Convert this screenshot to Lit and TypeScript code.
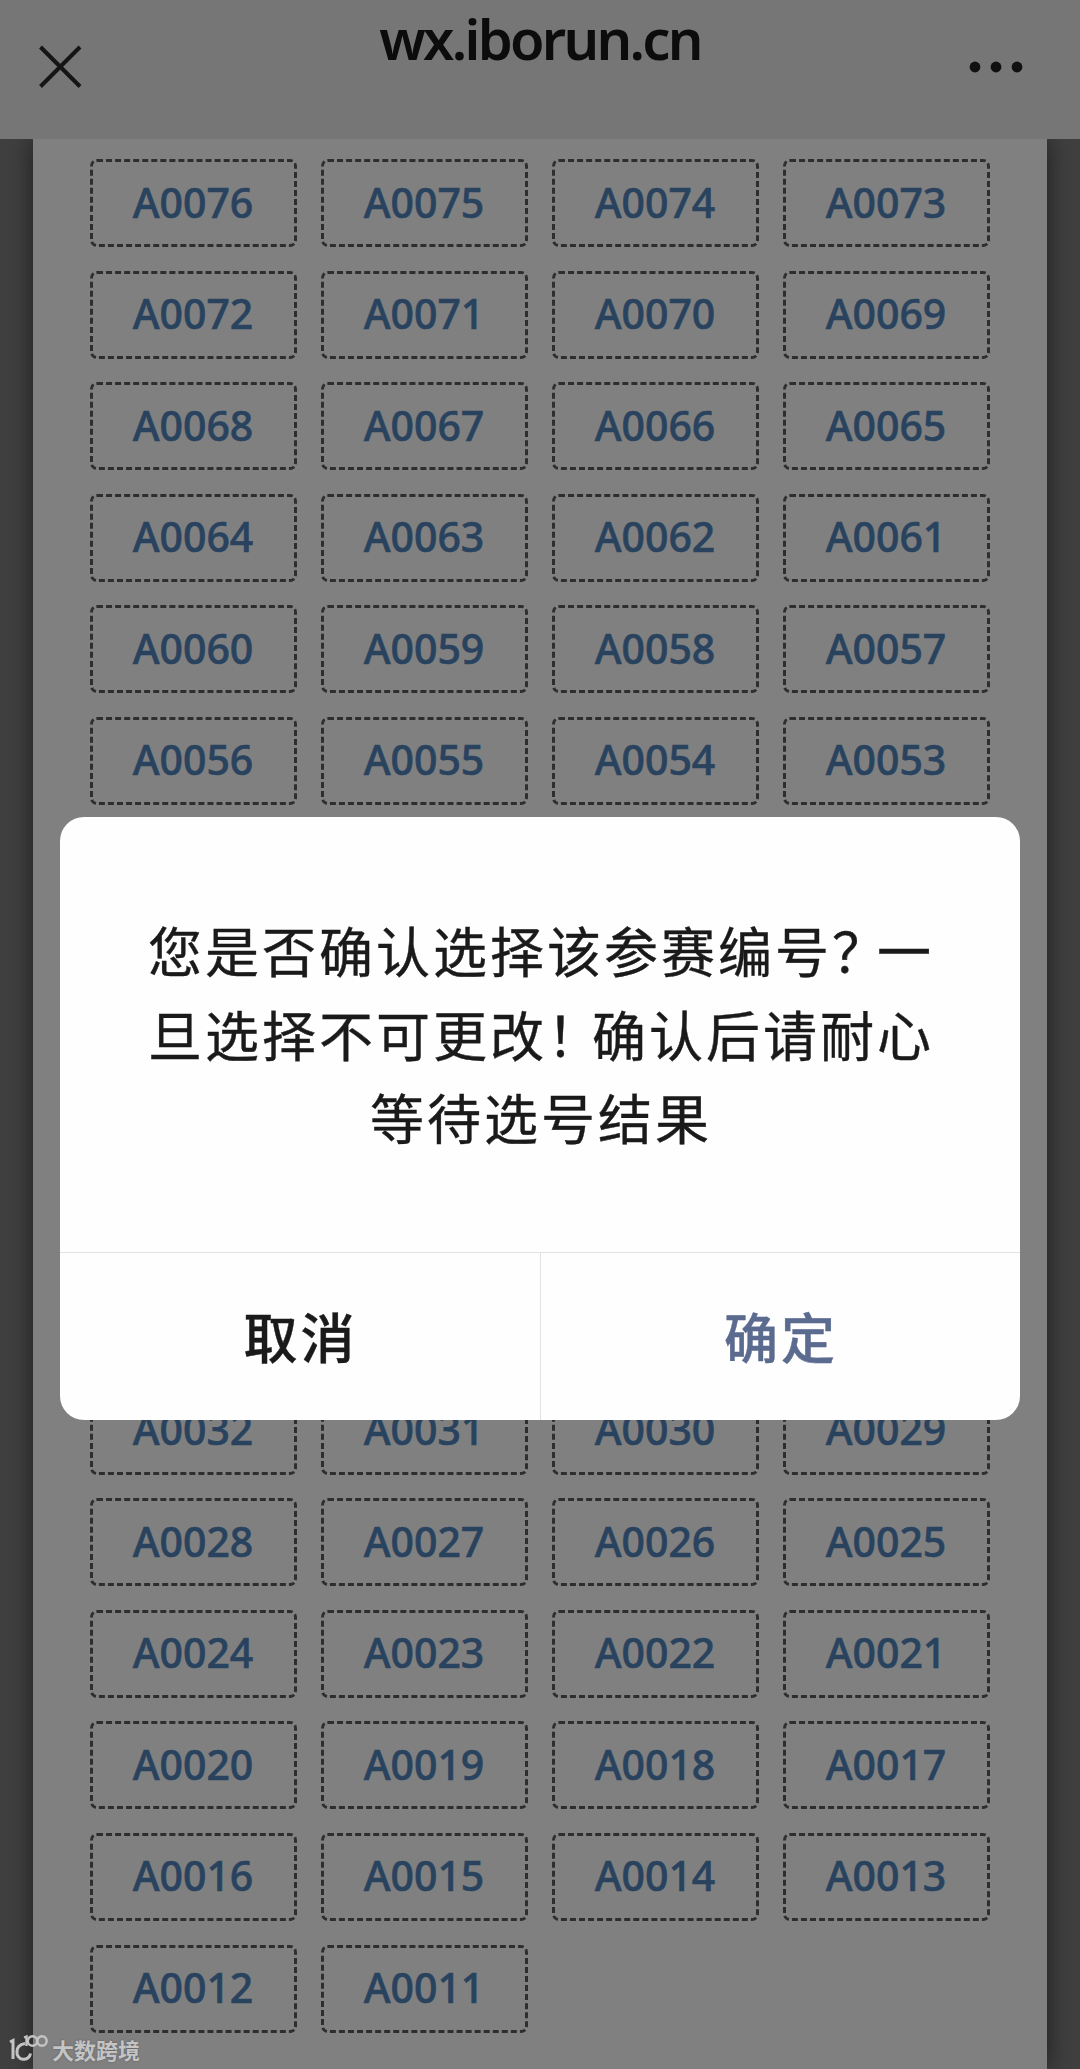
import { LitElement, html, css } from "lit";
import { customElement } from "lit/decorators.js";

const label = (n: number) => "A" + String(n).padStart(4, "0");
const range = (from: number, to: number) =>
  Array.from({ length: from - to + 1 }, (_, i) => label(from - i));

@customElement("number-grid")
class NumberGrid extends LitElement {
  static styles = css`
    :host { display: block; }
    .grid {
      display: grid;
      grid-template-columns: repeat(4, 207px);
      grid-auto-rows: 88px;
      column-gap: 24px;
      row-gap: 23.6px;
    }
    .cell {
      box-sizing: border-box;
      display: flex;
      align-items: center;
      justify-content: center;
      border: 3px dashed #2e2e2e;
      border-radius: 7px;
      color: #29435f;
      font: 500 41px/1 "Noto Sans", sans-serif;
      -webkit-text-stroke: 0.6px #29435f;
      padding: 0 1px 2px 0;
    }
    .covered { grid-column: 1 / -1; grid-row: span 5; }
  `;
  render() {
    const cell = (t: string) => html`<div class="cell"><span>${t}</span></div>`;
    return html`<div class="grid">
      ${range(76, 53).map(cell)}
      <div class="covered"></div>
      ${range(32, 11).map(cell)}
    </div>`;
  }
}

@customElement("confirm-dialog")
class ConfirmDialog extends LitElement {
  static styles = css`
    :host {
      display: flex;
      flex-direction: column;
      box-sizing: border-box;
      width: 960px;
      height: 603px;
      border-radius: 24px;
      background: #fefefe;
      overflow: hidden;
      color: #1a1a1a;
      font-family: "Noto Sans CJK SC", sans-serif;
    }
    .message {
      flex: 1;
      padding: 91px 0 0 2px;
      font-size: 54px;
      line-height: 83.5px;
      letter-spacing: 3px;
      text-align: center;
      white-space: nowrap;
      -webkit-text-stroke: 0.4px #1a1a1a;
    }
    .line { display: block; }
    .mark { letter-spacing: -9px; }
    .actions {
      display: grid;
      grid-template-columns: 480px 480px;
      height: 167px;
      border-top: 1px solid #e2e2e2;
    }
    .button {
      box-sizing: border-box;
      display: flex;
      align-items: center;
      justify-content: center;
      padding: 0 0 3px 1px;
      font-size: 54px;
      font-weight: 500;
      letter-spacing: 3px;
      -webkit-text-stroke: 0.4px currentColor;
    }
    .ok { color: #5b6b8f; border-left: 1px solid #e2e2e2; }
  `;
  render() {
    return html`
      <div class="message">
        <span class="line">您是否确认选择该参赛编号<span class="mark">？</span>一</span>
        <span class="line">旦选择不可更改<span class="mark">！</span>确认后请耐心</span>
        <span class="line">等待选号结果</span>
      </div>
      <div class="actions">
        <div class="button">取消</div>
        <div class="button ok">确定</div>
      </div>`;
  }
}

@customElement("app-root")
class AppRoot extends LitElement {
  static styles = css`
    :host {
      display: flex;
      flex-direction: column;
      position: relative;
      width: 1080px;
      height: 2069px;
      overflow: hidden;
      background: #404040;
    }
    .header {
      box-sizing: border-box;
      display: grid;
      grid-template-columns: 1fr auto 1fr;
      align-items: start;
      height: 139px;
      padding: 0 55px 0 39px;
      background: #767676;
      color: #0c0c0c;
      flex: none;
      z-index: 1;
    }
    .close { margin-top: 45px; }
    .more { margin-top: 60px; justify-self: end; }
    .title {
      font: 600 56px/77px "Noto Sans", sans-serif;
      letter-spacing: -2.7px;
      padding-left: 16px;
    }
    .panel {
      box-sizing: border-box;
      width: 1014px;
      margin-left: 33px;
      padding: 20px 0 0 57px;
      flex: 1;
      background: #808080;
      box-shadow: 0 0 24px #1c1c1c;
    }
    .dialog { position: absolute; left: 60px; top: 817px; }
    .watermark {
      position: absolute;
      left: 9px;
      top: 2032px;
      display: flex;
      gap: 4px;
      color: #c4c4c4;
      font: 700 22px/34px "Noto Sans CJK SC", sans-serif;
      text-shadow: 0 0 2px #555;
    }
    .mark { margin-top: 2px; }
  `;
  render() {
    return html`
      <div class="header">
        <svg class="close" width="43" height="44" viewBox="0 0 43 44" fill="none" stroke="#151515" stroke-width="4">
          <path d="M1.5 2 41 41.500M41 2 1.500 41.500" />
        </svg>
        <div class="title">wx.iborun.cn</div>
        <svg class="more" width="58" height="14" viewBox="0 0 58 14" fill="#101010">
          <circle cx="8" cy="7" r="5.4" /><circle cx="29" cy="7" r="5.4" /><circle cx="50" cy="7" r="5.4" />
        </svg>
      </div>
      <div class="panel"><number-grid></number-grid></div>
      <confirm-dialog class="dialog"></confirm-dialog>
      <div class="watermark">
        <svg class="mark" width="39" height="28" viewBox="0 0 39 28" fill="none" stroke="#c4c4c4" stroke-width="3">
          <path d="M1 8 4 6.500V25M16 9.500C10 10.500 8 14 8 17.500A6.800 6.800 0 0 0 21.500 19.500" />
          <path d="M15 3.500 17.500 2.500V12" stroke-width="2.400" />
          <circle cx="23.500" cy="7" r="4.700" stroke-width="2.400" /><circle cx="33" cy="7" r="4.700" stroke-width="2.400" />
        </svg>
        <span>大数跨境</span>
      </div>`;
  }
}
